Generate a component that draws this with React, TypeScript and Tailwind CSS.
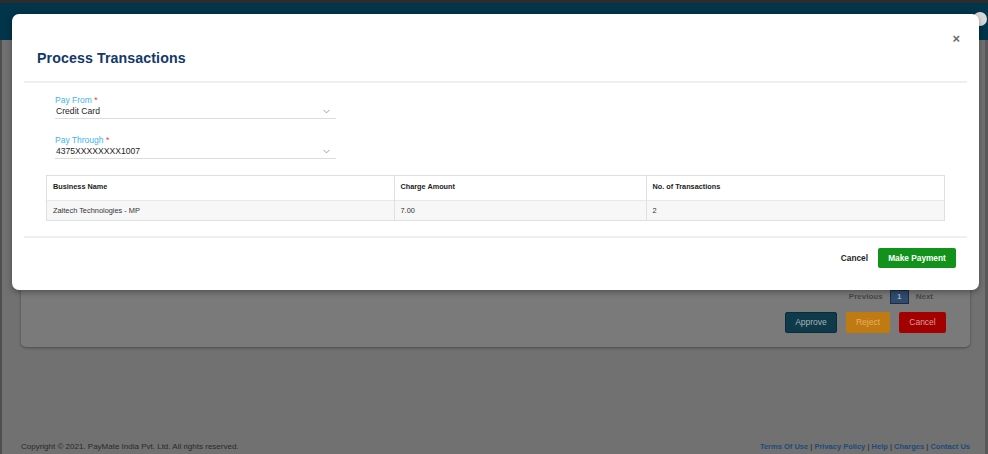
import { ChevronDown } from 'lucide-react';

const rows = [{ name: 'Zaitech Technologies - MP', amount: '7.00', count: '2' }];

function Field({ label, value }: { label: string; value: string }) {
  return (
    <div className="w-[281px]">
      <div className="text-[8.5px] leading-[10px] text-[#3db5ec]">
        {label} <span className="text-[#e53935]">*</span>
      </div>
      <div className="flex items-center justify-between h-[12px] pl-[1px] pr-[4px]">
        <span className="text-[8.6px] text-[#1e1e1e]">{value}</span>
        <ChevronDown className="w-[11px] h-[11px] text-[#777]" strokeWidth={1.5} />
      </div>
      <div className="mt-[1px] h-[1px] bg-[#dcdcdc]" />
    </div>
  );
}

export default function App() {
  return (
    <div className="relative w-[988px] h-[454px] overflow-hidden bg-[#717171] font-['Liberation_Sans',Arial,sans-serif]">
      {/* page behind the dialog */}
      <div className="flex flex-col h-full">
        <div className="h-[3px] bg-[#2d2d2d]" />
        <div className="relative h-[37px] bg-[#02344a]">
          <div className="absolute left-[973px] top-[9px] w-[14px] h-[14px] rounded-full bg-[#d9d9d9]" />
        </div>
        <div className="flex flex-1 min-h-0">
          <div className="w-[2px] bg-[#4f4f4f]" />
          <div className="flex-1 flex flex-col">
            <div className="ml-[19px] mt-[15px] w-[949px] h-[292px] rounded-[5px] bg-[#7a7a7a] shadow-[0_1px_3px_rgba(0,0,0,0.35)] flex flex-col justify-end items-end pr-[24px] pb-[14px]">
              <div className="flex items-center gap-[7px] text-[8px] font-bold text-[#474747] mr-[13px]">
                <span>Previous</span>
                <span className="w-[19px] h-[14px] flex items-center justify-center bg-[#2f4b6e] border border-[#1b2d42] text-[#9fb0c4]">1</span>
                <span>Next</span>
              </div>
              <div className="flex gap-[9px] mt-[8px] text-[8.5px]">
                <span className="w-[52px] h-[21px] flex items-center justify-center rounded-[2px] bg-[#0e3a4a] border border-[#0a2c38] text-[#a7b4b9]">Approve</span>
                <span className="w-[44px] h-[21px] flex items-center justify-center rounded-[2px] bg-[#bf7a12] text-[#e7b061]">Reject</span>
                <span className="w-[47px] h-[21px] flex items-center justify-center rounded-[2px] bg-[#a30000] text-[#dc9c9c]">Cancel</span>
              </div>
            </div>
            <div className="flex-1" />
            <div className="flex items-center justify-between h-[14px] pl-[19px] pr-[15px] text-[8px]">
              <span className="text-[#2a2a2a]">Copyright © 2021. PayMate India Pvt. Ltd. All rights reserved.</span>
              <span className="text-[7.5px] font-bold text-[#1c4b7b]">
                Terms Of Use <span className="text-[#3c3c3c]">|</span> Privacy Policy <span className="text-[#3c3c3c]">|</span> Help{' '}
                <span className="text-[#3c3c3c]">|</span> Charges <span className="text-[#3c3c3c]">|</span> Contact Us
              </span>
            </div>
          </div>
          <div className="w-[3px] bg-[#585858]" />
        </div>
      </div>

      {/* dialog */}
      <div className="absolute left-[12px] top-[14px] w-[967px] h-[276px] rounded-[7px] bg-white shadow-[0_2px_6px_rgba(0,0,0,0.35)] px-[12px]">
        <div className="relative h-[67px]">
          <span className="absolute right-[7px] top-[18px] text-[13px] leading-[14px] font-bold text-[#6b6b6b]">×</span>
          <h2 className="pt-[36px] pl-[13px] text-[14.2px] leading-[17px] font-bold text-[#13386b] tracking-[0.1px]">Process Transactions</h2>
        </div>
        <div className="h-[2px] bg-[#efefef]" />

        <div className="pl-[31px] pt-[12px] flex flex-col gap-[16px]">
          <Field label="Pay From" value="Credit Card" />
          <Field label="Pay Through" value="4375XXXXXXXX1007" />
        </div>

        <div className="mx-[22px] mt-[16px] border border-[#dde1e5]">
          <table className="w-full border-collapse text-left">
            <thead>
              <tr className="h-[24px] bg-white">
                <th className="w-[347px] pl-[6px] text-[7.3px] font-bold text-[#222]">Business Name</th>
                <th className="w-[252px] pl-[6px] text-[7.3px] font-bold text-[#222] border-l border-[#dde1e5]">Charge Amount</th>
                <th className="pl-[6px] text-[7.3px] font-bold text-[#222] border-l border-[#dde1e5]">No. of Transactions</th>
              </tr>
            </thead>
            <tbody>
              {rows.map((r) => (
                <tr key={r.name} className="h-[20px] bg-[#f7f7f7] border-t border-[#e6e9ec]">
                  <td className="pl-[6px] text-[7.4px] text-[#333]">{r.name}</td>
                  <td className="pl-[6px] text-[7.4px] text-[#333] border-l border-[#dde1e5]">{r.amount}</td>
                  <td className="pl-[6px] text-[7.4px] text-[#333] border-l border-[#dde1e5]">{r.count}</td>
                </tr>
              ))}
            </tbody>
          </table>
        </div>

        <div className="mt-[15px] h-[2px] bg-[#efefef]" />

        <div className="flex items-center justify-end gap-[10px] mt-[10px] pr-[11px]">
          <span className="text-[8.3px] font-bold text-[#1e1e1e]">Cancel</span>
          <span className="w-[78px] h-[20px] flex items-center justify-center rounded-[2px] bg-[#12921a] text-[8.3px] font-bold text-white">
            Make Payment
          </span>
        </div>
      </div>
    </div>
  );
}
